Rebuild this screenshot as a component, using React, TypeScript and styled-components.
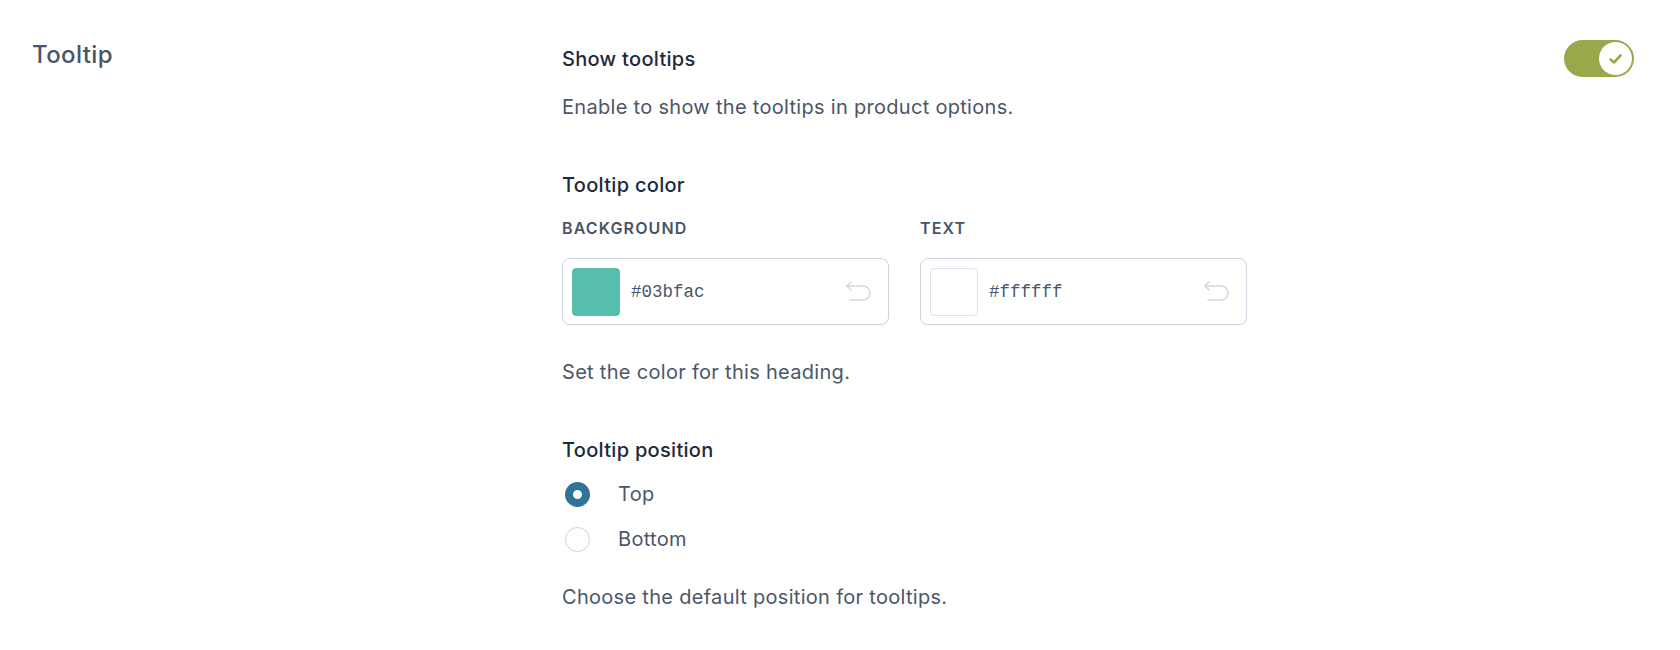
import React, { FC, useState } from 'react';
import styled, { createGlobalStyle } from 'styled-components';

const GlobalStyle = createGlobalStyle`
    html, body {
        margin: 0;
        padding: 0;
        background: #ffffff;
    }
    body {
        font-family: Inter, "Noto Sans", "Liberation Sans", sans-serif;
        -webkit-font-smoothing: antialiased;
    }
`;

type Position = 'top' | 'bottom';

const UndoIcon: FC = () => (
    <svg width="27" height="22" viewBox="0 0 27 22" fill="none">
        <path
            d="M2 5 H18 A7 7 0 0 1 18 19 H5"
            stroke="#d4d7dd"
            strokeWidth="1.6"
            strokeLinecap="round"
            strokeLinejoin="round"
        />
        <path
            d="M6 1 L2 5 L6 9"
            stroke="#d4d7dd"
            strokeWidth="1.6"
            strokeLinecap="round"
            strokeLinejoin="round"
        />
    </svg>
);

const App: FC = () => {
    const [showTooltips, setShowTooltips] = useState<boolean>(true);
    const [position, setPosition] = useState<Position>('top');

    return (
        <>
            <GlobalStyle />
            <StyledSection>
                <StyledSectionTitle>Tooltip</StyledSectionTitle>
                <StyledFields>
                    <StyledFieldHeader>
                        <StyledLabel>Show tooltips</StyledLabel>
                        <StyledToggle $on={showTooltips} onClick={() => setShowTooltips(!showTooltips)}>
                            <StyledKnob $on={showTooltips}>
                                <svg width="15" height="12" viewBox="0 0 15 12" fill="none">
                                    <path
                                        d="M2.5 6.5 L6 9.5 L12.5 2.5"
                                        stroke="#9aa74b"
                                        strokeWidth="2.6"
                                        strokeLinecap="round"
                                        strokeLinejoin="round"
                                    />
                                </svg>
                            </StyledKnob>
                        </StyledToggle>
                    </StyledFieldHeader>
                    <StyledHelp>Enable to show the tooltips in product options.</StyledHelp>

                    <StyledFieldBlock>
                        <StyledLabel>Tooltip color</StyledLabel>
                        <StyledColorGrid>
                            <StyledColorField>
                                <StyledSubLabel>Background</StyledSubLabel>
                                <StyledColorInput>
                                    <StyledSwatch $color="#57bead" />
                                    <StyledHex>#03bfac</StyledHex>
                                    <UndoIcon />
                                </StyledColorInput>
                            </StyledColorField>
                            <StyledColorField>
                                <StyledSubLabel>Text</StyledSubLabel>
                                <StyledColorInput>
                                    <StyledSwatch $color="#ffffff" />
                                    <StyledHex>#ffffff</StyledHex>
                                    <UndoIcon />
                                </StyledColorInput>
                            </StyledColorField>
                        </StyledColorGrid>
                        <StyledHelp $top={33}>Set the color for this heading.</StyledHelp>
                    </StyledFieldBlock>

                    <StyledFieldBlock>
                        <StyledLabel>Tooltip position</StyledLabel>
                        <StyledRadioList>
                            <StyledRadioRow onClick={() => setPosition('top')}>
                                <StyledRadio $checked={position === 'top'} />
                                <StyledRadioText>Top</StyledRadioText>
                            </StyledRadioRow>
                            <StyledRadioRow onClick={() => setPosition('bottom')}>
                                <StyledRadio $checked={position === 'bottom'} />
                                <StyledRadioText>Bottom</StyledRadioText>
                            </StyledRadioRow>
                        </StyledRadioList>
                        <StyledHelp $top={30}>Choose the default position for tooltips.</StyledHelp>
                    </StyledFieldBlock>
                </StyledFields>
            </StyledSection>
        </>
    );
};

const StyledSection = styled.section`
    display: grid;
    grid-template-columns: 530px 1fr;
    padding: 40px 46px 0 32px;
`;

const StyledSectionTitle = styled.h2`
    margin: 0;
    font-size: 24px;
    font-weight: 500;
    line-height: 30px;
    letter-spacing: 0.4px;
    color: #4a5568;
`;

const StyledFields = styled.div`
    display: flex;
    flex-direction: column;
`;

const StyledFieldHeader = styled.div`
    display: flex;
    align-items: center;
    justify-content: space-between;
    height: 37px;
`;

const StyledLabel = styled.div`
    font-size: 20px;
    font-weight: 500;
    line-height: 28px;
    letter-spacing: 0.3px;
    color: #1e293b;
`;

const StyledHelp = styled.p<{ $top?: number }>`
    margin: ${props => props.$top ?? 16}px 0 0;
    font-size: 20px;
    line-height: 28px;
    letter-spacing: 0.3px;
    color: #4b5669;
`;

const StyledToggle = styled.button<{ $on: boolean }>`
    position: relative;
    width: 70px;
    height: 37px;
    padding: 0;
    border: none;
    border-radius: 19px;
    background: ${props => (props.$on ? '#9aa74b' : '#cbd5e1')};
    cursor: pointer;
`;

const StyledKnob = styled.span<{ $on: boolean }>`
    position: absolute;
    top: 2px;
    left: ${props => (props.$on ? '35px' : '2px')};
    width: 33px;
    height: 33px;
    border-radius: 50%;
    background: #ffffff;
    display: flex;
    align-items: center;
    justify-content: center;
`;

const StyledFieldBlock = styled.div`
    display: flex;
    flex-direction: column;
    margin-top: 50px;
`;

const StyledColorGrid = styled.div`
    display: flex;
    gap: 31px;
    margin-top: 19px;
`;

const StyledColorField = styled.div`
    display: flex;
    flex-direction: column;
    gap: 20px;
    width: 327px;
`;

const StyledSubLabel = styled.div`
    font-size: 16px;
    font-weight: 600;
    line-height: 20px;
    letter-spacing: 0.07em;
    text-transform: uppercase;
    color: #475569;
`;

const StyledColorInput = styled.div`
    display: flex;
    align-items: center;
    height: 67px;
    box-sizing: border-box;
    padding: 0 16px 0 9px;
    border: 1px solid #cfd6e3;
    border-radius: 8px;
    box-shadow: 0 1px 2px rgba(15, 23, 42, 0.05);
`;

const StyledSwatch = styled.span<{ $color: string }>`
    width: 48px;
    height: 48px;
    border-radius: 4px;
    background: ${props => props.$color};
    border: 1px solid ${props => (props.$color === '#ffffff' ? '#dfe3ea' : props.$color)};
    box-sizing: border-box;
`;

const StyledHex = styled.span`
    flex: 1;
    margin-left: 11px;
    font-family: "Liberation Mono", "DejaVu Sans Mono", monospace;
    font-size: 17.5px;
    color: #4b5669;
`;

const StyledRadioList = styled.div`
    display: flex;
    flex-direction: column;
    gap: 17px;
    margin-top: 16px;
`;

const StyledRadioRow = styled.label`
    display: flex;
    align-items: center;
    height: 28px;
    cursor: pointer;
`;

const StyledRadio = styled.span<{ $checked: boolean }>`
    width: 25px;
    height: 25px;
    margin-left: 3px;
    box-sizing: border-box;
    border-radius: 50%;
    border: ${props => (props.$checked ? '8px solid #2f7399' : '1px solid #cbd3df')};
    background: #ffffff;
`;

const StyledRadioText = styled.span`
    margin-left: 28px;
    font-size: 20px;
    line-height: 28px;
    letter-spacing: 0.3px;
    color: #4b5669;
`;

export default App;
